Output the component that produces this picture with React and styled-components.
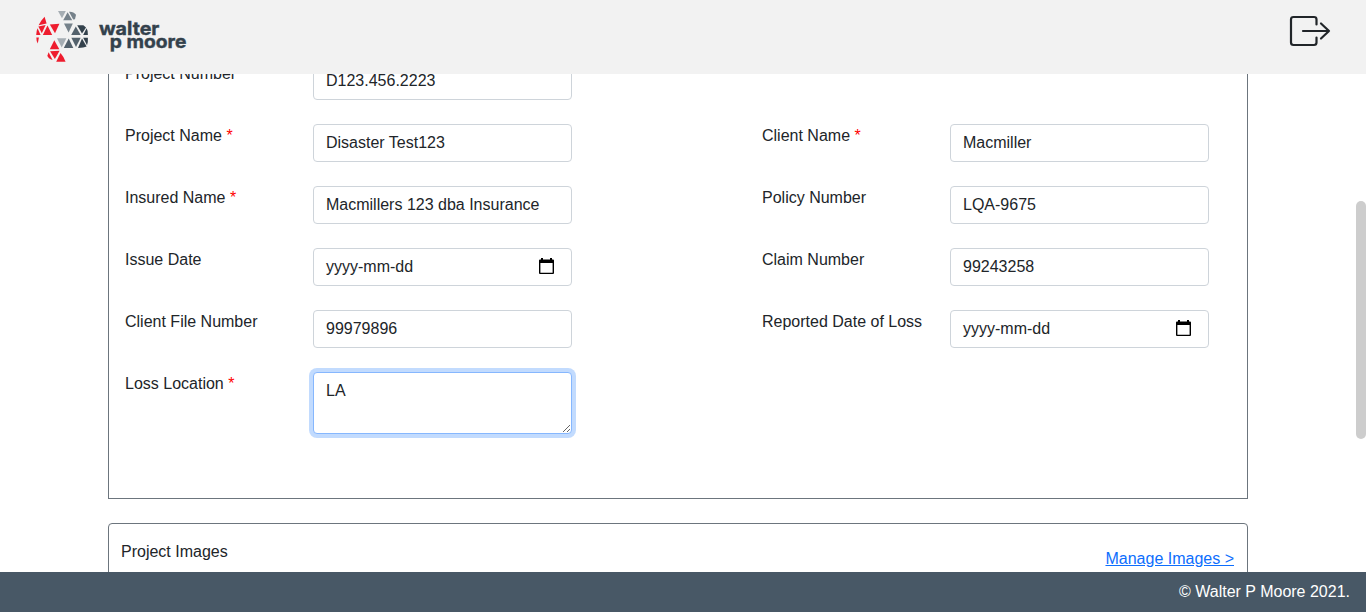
import React from "react";
import styled, { createGlobalStyle, css } from "styled-components";

const GlobalStyle = createGlobalStyle`
  *, *::before, *::after { box-sizing: border-box; }
  html, body { margin: 0; height: 100%; overflow: hidden; }
  body {
    font: 16px/24px "Liberation Sans", Arial, sans-serif;
    color: #212529;
    background: #fff;
  }
`;

const Page = styled.div`
  display: flex;
  flex-direction: column;
  height: 612px;
  overflow: hidden;
`;

const Header = styled.header`
  display: flex;
  flex: 0 0 74px;
  align-items: flex-start;
  justify-content: space-between;
  padding: 8px 35px 0 34px;
  background: #f2f2f2;
`;

const LogoSvg = styled.svg`
  display: block;
  font-family: Inter, "Open Sans", sans-serif;
  font-size: 18.5px;
  font-weight: 700;
`;

const LogoutButton = styled.button`
  display: flex;
  padding: 7px 0 0;
  border: 0;
  background: none;
  color: #212529;
`;

const Body = styled.div`
  display: flex;
  flex: 1;
  min-height: 0;
`;

const Scroller = styled.main`
  display: flex;
  flex: 1;
  flex-direction: column;
  align-items: center;
  justify-content: flex-start;
  min-width: 0;
  overflow: hidden;
`;

const ScrollTrack = styled.div`
  flex: 0 0 10px;
  padding-top: 127px;
`;

const ScrollThumb = styled.div`
  height: 238px;
  border-radius: 5px;
  background: #cdcdcd;
`;

const Panel = styled.section`
  flex: none;
  width: 1140px;
  border: 1px solid #6c757d;
`;

const FormPanel = styled(Panel)`
  height: 437px;
  margin-top: -12px;
  border-top: 0;
`;

const FormRow = styled.div`
  display: grid;
  grid-template-columns: 637px 1fr;
  margin-bottom: 24px;
  padding-left: 16px;
`;

const Field = styled.div`
  display: grid;
  grid-template-columns: 188px 259px;
  align-items: start;
`;

const Label = styled.label`
  white-space: nowrap;
`;

const Required = styled.span`
  color: #f00;
`;

const control = css`
  width: 100%;
  padding: 6px 12px;
  border: 1px solid #ced4da;
  border-radius: 4px;
  background: #fff;
  color: #212529;
  font: inherit;
  outline: 0;
`;

const Input = styled.input`
  ${control}
  height: 38px;
`;

const DateBox = styled.div`
  ${control}
  display: flex;
  align-items: center;
  justify-content: space-between;
  height: 38px;
  padding-right: 16px;
`;

const TextArea = styled.textarea`
  ${control}
  display: block;
  height: 62px;
  border-color: #86b7fe;
  box-shadow: 0 0 0 4px rgba(13, 110, 253, 0.25);
  resize: vertical;
`;

const ImagesPanel = styled(Panel)`
  display: flex;
  justify-content: space-between;
  height: 120px;
  margin-top: 24px;
  padding: 16px 13px 0 12px;
  border-radius: 4px;
`;

const ManageLink = styled.a`
  margin-top: 7px;
  color: #0d6efd;
  text-decoration: underline;
`;

const Footer = styled.footer`
  flex: 0 0 40px;
  padding: 8px 16px;
  background: #485866;
  color: #fff;
  text-align: right;
`;

function Logo() {
  return (
    <LogoSvg width="156" height="56" viewBox="34 8 156 56" role="img" aria-label="Walter P Moore">
      <g fill="#ee1c2e">
        <path d="M44.6 16.8 46.6 23.6 38.6 25.2Q41 20.5 44.6 16.8Z" />
        <path d="M38.4 26.4 45.6 25 41.8 33.2Z" />
        <path d="M37.6 28.2 40.6 35H36.2Q36.2 31 37.6 28.2Z" />
        <path d="M47.5 25.6 52.2 35H42.8Z" />
        <path d="M49.8 24.4 59.4 23.8 55 33.2Z" />
        <path d="M36.3 37.6H38.9L37.8 43.6Q36.3 41 36.3 37.6Z" />
        <path d="M54.3 40.2 59.3 49.2H49.8Z" />
        <path d="M50 51.2 59.6 50.8 54.9 59Z" />
        <path d="M48.6 52.3 52.6 60Q48 58.6 47.4 55.8Z" />
        <path d="M60.5 53Q64 57 65.6 61.8H56.2Z" />
      </g>
      <g fill="#a5adb3">
        <path d="M58 11H65.8L62 18.3Z" />
        <path d="M57 38.2H66.4L61.7 47.6Z" />
      </g>
      <g fill="#75818a">
        <path d="M64 23.6H72.8L68.6 32.6Z" />
        <path d="M67.6 12.2 72.2 20.2H63.2Z" />
        <path d="M69 11.8Q73.4 11.4 76 14.8L75 19.2 73.2 19.4Z" />
      </g>
      <g fill="#53616c">
        <path d="M75.8 26.4 80.7 35H71.2Z" />
        <path d="M68.7 38.6 73.3 48H63.8Z" />
        <path d="M71.4 37.8H80.7L76 47Z" />
      </g>
      <g fill="#33414c">
        <path d="M77.2 25.2H83.4L86 27.4 82 33.4Z" />
        <path d="M86.6 28.2Q88.2 31 87.9 35H83.2Z" />
        <path d="M82 38.4 86.6 46.6Q84 48 78 48Z" />
        <path d="M83.2 37.8H87.9Q88.2 42 87 45.2Z" />
      </g>
      <g fill="#33414c" stroke="#33414c" strokeWidth="0.4">
        <text x="98.9" y="35" textLength="60.5" lengthAdjust="spacingAndGlyphs">walter</text>
        <text x="109.8" y="48" textLength="76.6" lengthAdjust="spacingAndGlyphs">p moore</text>
      </g>
    </LogoSvg>
  );
}

function LogoutIcon() {
  return (
    <svg width="42" height="32" viewBox="0 0 42 32" fill="none" stroke="currentColor" strokeWidth="2.2" strokeLinecap="round" strokeLinejoin="round">
      <path d="M27.5 9.5V4.5Q27.5 2 25 2H4.5Q2 2 2 4.5V27.5Q2 30 4.5 30H25Q27.5 30 27.5 27.5V22.5" />
      <path d="M14 16H40M32 8.5 40 16 32 23.5" />
    </svg>
  );
}

function CalendarIcon() {
  return (
    <svg width="17" height="18" viewBox="0 0 17 18">
      <path fill="#000" fillRule="evenodd" d="M3 0h2v1.5h7V0h2v1.5h1q1 0 1 1V15q0 1-1 1H2q-1 0-1-1V2.5q0-1 1-1H3ZM2.4 5v9.8h12.2V5Z" />
    </svg>
  );
}

function FormField({ label, required, value, type = "text" }) {
  return (
    <Field>
      <Label>
        {label} {required && <Required>*</Required>}
      </Label>
      {type === "text" && <Input defaultValue={value} />}
      {type === "date" && (
        <DateBox>
          <span>yyyy-mm-dd</span>
          <CalendarIcon />
        </DateBox>
      )}
      {type === "area" && <TextArea defaultValue={value} />}
    </Field>
  );
}

const rows = [
  [{ label: "Project Number", value: "D123.456.2223" }],
  [
    { label: "Project Name", required: true, value: "Disaster Test123" },
    { label: "Client Name", required: true, value: "Macmiller" },
  ],
  [
    { label: "Insured Name", required: true, value: "Macmillers 123 dba Insurance" },
    { label: "Policy Number", value: "LQA-9675" },
  ],
  [
    { label: "Issue Date", type: "date" },
    { label: "Claim Number", value: "99243258" },
  ],
  [
    { label: "Client File Number", value: "99979896" },
    { label: "Reported Date of Loss", type: "date" },
  ],
  [{ label: "Loss Location", required: true, type: "area", value: "LA" }],
];

export default function App() {
  return (
    <Page>
      <GlobalStyle />
      <Header>
        <Logo />
        <LogoutButton aria-label="Log out">
          <LogoutIcon />
        </LogoutButton>
      </Header>
      <Body>
        <Scroller>
          <FormPanel>
            {rows.map((fields) => (
              <FormRow key={fields[0].label}>
                {fields.map((field) => (
                  <FormField key={field.label} {...field} />
                ))}
              </FormRow>
            ))}
          </FormPanel>
          <ImagesPanel>
            <span>Project Images</span>
            <ManageLink href="#">Manage Images &gt;</ManageLink>
          </ImagesPanel>
        </Scroller>
        <ScrollTrack>
          <ScrollThumb />
        </ScrollTrack>
      </Body>
      <Footer>© Walter P Moore 2021.</Footer>
    </Page>
  );
}
